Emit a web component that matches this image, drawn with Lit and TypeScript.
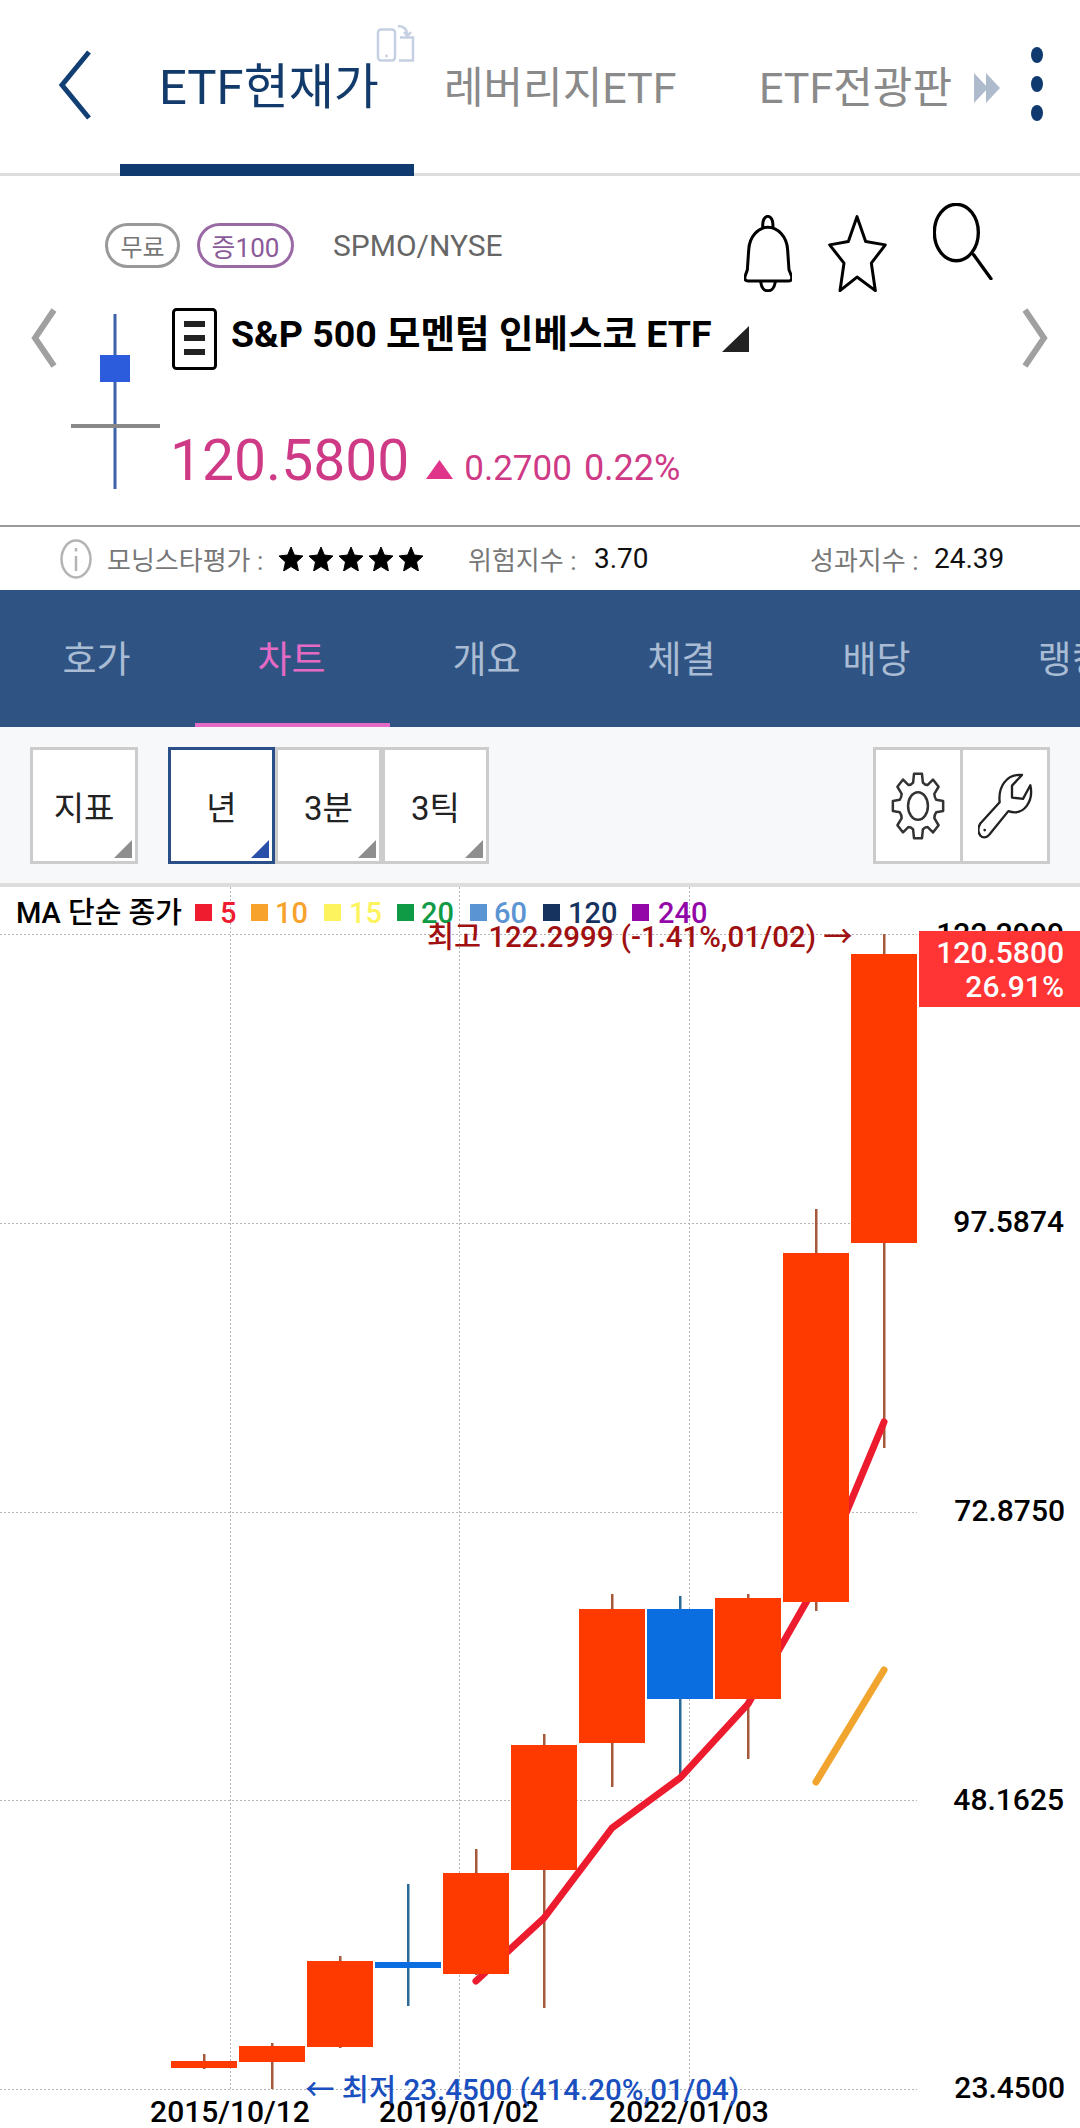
import { LitElement, html, css, svg } from "lit";
import { customElement } from "lit/decorators.js";

const FONT = `Roboto, "Noto Sans CJK KR", sans-serif`;

type Candle = { x: number; top: number; bot: number; hi: number; lo: number; blue?: boolean };
const candles: Candle[] = [
  { x: 171, top: 2061, bot: 2068, hi: 2054, lo: 2069 },
  { x: 239, top: 2046, bot: 2062, hi: 2043, lo: 2089 },
  { x: 307, top: 1961, bot: 2047, hi: 1956, lo: 2048 },
  { x: 375, top: 1962, bot: 1968, hi: 1884, lo: 2006, blue: true },
  { x: 443, top: 1873, bot: 1974, hi: 1849, lo: 1975 },
  { x: 511, top: 1745, bot: 1870, hi: 1734, lo: 2008 },
  { x: 579, top: 1609, bot: 1743, hi: 1594, lo: 1787 },
  { x: 647, top: 1609, bot: 1699, hi: 1596, lo: 1778, blue: true },
  { x: 715, top: 1598, bot: 1699, hi: 1594, lo: 1759 },
  { x: 783, top: 1253, bot: 1602, hi: 1209, lo: 1611 },
  { x: 851, top: 954, bot: 1243, hi: 934, lo: 1448 },
];

const legend = [
  { sq: 195, tx: 220, t: "5", c: "#ee1c2e" },
  { sq: 251, tx: 275, t: "10", c: "#f7a22d" },
  { sq: 324, tx: 349, t: "15", c: "#fdf35e" },
  { sq: 397, tx: 421, t: "20", c: "#0f9b45" },
  { sq: 470, tx: 494, t: "60", c: "#5b94d2" },
  { sq: 543, tx: 568, t: "120", c: "#16325f" },
  { sq: 632, tx: 658, t: "240", c: "#9306a8" },
];

const gearPath = (() => {
  const p = (r: number, deg: number) => {
    const a = (deg * Math.PI) / 180;
    return `${(r * Math.cos(a)).toFixed(3)} ${(r * Math.sin(a)).toFixed(3)}`;
  };
  let d = "";
  for (let i = 0; i < 8; i++) {
    const a = i * 45 - 90;
    d += `${i ? "L" : "M"}${p(0.74, a - 15)} L${p(1, a - 9)} L${p(1, a + 9)} L${p(0.74, a + 15)} `;
    d += `Q${p(0.7, a + 22.5)} ${p(0.74, a + 30)} `;
  }
  return d + "Z";
})();

@customElement("app-root")
export class AppRoot extends LitElement {
  static styles = css`
    :host {
      display: block;
      width: 1080px;
      height: 2128px;
      overflow: hidden;
      background: #fff;
      font-family: Roboto, "Noto Sans CJK KR", sans-serif;
    }
    * { box-sizing: border-box; }
    svg { display: block; flex: none; }

    .top {
      height: 176px;
      border-bottom: 3px solid #ddd;
      display: flex;
      align-items: flex-start;
      white-space: nowrap;
    }
    .back { margin: 50px 0 0 58px; }
    .tab { flex: none; }
    .tab.on {
      position: relative;
      width: 294px;
      height: 173px;
      margin-left: 28px;
      padding: 64px 0 0 39px;
      font-size: 49px;
      line-height: 48px;
      color: #123a6b;
    }
    .tab.on::after {
      content: "";
      position: absolute;
      left: 0;
      right: 0;
      bottom: -3px;
      height: 12px;
      background: #0e3a70;
    }
    .rotate { position: absolute; left: 256px; top: 24px; }
    .tab.off {
      margin-top: 67px;
      font-size: 43px;
      line-height: 43px;
      color: #8a8a8a;
    }
    .t2 { margin-left: 30px; width: 232px; }
    .t3 { margin-left: 83px; width: 190px; }
    .more { margin: 72px 0 0 25px; }
    .dots { margin: 46px 0 0 30px; }

    .quote {
      height: 351px;
      border-bottom: 2px solid #999;
    }
    .q1 {
      height: 124px;
      padding: 47px 87px 0 105px;
      display: flex;
      align-items: flex-start;
    }
    .chip {
      height: 45px;
      border: 3px solid #999;
      border-radius: 23px;
      display: flex;
      align-items: center;
      justify-content: center;
      color: #777;
      font-size: 24px;
      width: 75px;
    }
    .chip.mid {
      width: 97px;
      margin-left: 17px;
      border-color: #9a6aa5;
      color: #8b5a98;
      font-size: 26px;
    }
    .code {
      margin-left: 39px;
      font-size: 30px;
      line-height: 45px;
      color: #666;
    }
    .bell { margin: -8px 0 0 auto; }
    .star { margin: -8px 0 0 36px; }
    .search { margin: -20px 0 0 46px; }

    .q2 {
      height: 225px;
      padding-left: 31px;
      display: flex;
      align-items: flex-start;
    }
    .chev-l { margin-top: 8px; }
    .chev-r { margin: 8px 32px 0 auto; }
    .mini { margin: 14px 0 0 14px; }
    .main { margin: 8px 0 0 12px; }
    .name { display: flex; align-items: flex-start; }
    .title {
      margin: 6px 0 0 14px;
      font-size: 37.5px;
      line-height: 40px;
      font-weight: 700;
      color: #000;
      white-space: nowrap;
    }
    .caret { margin: 18px 0 0 10px; }
    .price {
      margin-top: 63px;
      display: flex;
      align-items: baseline;
      color: #cf3a86;
      white-space: nowrap;
    }
    .now { font-size: 57px; line-height: 56px; margin-left: -2px; }
    .up { margin: 0 11px 10px 17px; align-self: flex-end; }
    .chg { font-size: 35px; line-height: 30px; }
    .pct { font-size: 36px; line-height: 30px; margin-left: 12px; }

    .info {
      height: 63px;
      padding-left: 60px;
      display: flex;
      align-items: center;
      white-space: nowrap;
      font-size: 26px;
      color: #777;
    }
    .lab1 { margin-left: 15px; width: 172px; }
    .stars { display: flex; gap: 6px; width: 189px; }
    .lab2 { width: 126px; }
    .val { font-size: 28px; color: #111; }
    .v1 { width: 216px; }
    .lab3 { width: 124px; }

    .nav {
      height: 137px;
      background: #2f5483;
      display: flex;
      overflow: hidden;
    }
    .nav div {
      flex: none;
      width: 195px;
      padding-right: 2px;
      display: flex;
      align-items: center;
      justify-content: center;
      font-size: 37px;
      color: #a9bcd4;
      border-bottom: 4px solid transparent;
    }
    .nav div.on { color: #e56ac6; border-bottom-color: #e56ac6; }

    .tools {
      height: 160px;
      background: #f7f8f9;
      border-bottom: 4px solid #ddd;
      padding: 20px 30px 0;
      display: flex;
      align-items: flex-start;
    }
    .btn {
      position: relative;
      flex: none;
      width: 107px;
      height: 117px;
      background: #fff;
      border: 3px solid #ccc;
      display: flex;
      align-items: center;
      justify-content: center;
      font-size: 33px;
      color: #222;
    }
    .btn::after {
      content: "";
      position: absolute;
      right: 3px;
      bottom: 3px;
      width: 18px;
      height: 18px;
      background: #8e8e8e;
      clip-path: polygon(100% 0, 100% 100%, 0 100%);
    }
    .btn.first { width: 108px; margin-right: 30px; }
    .btn.sel { border-color: #2a4f88; }
    .btn.sel::after { background: #2a4fa8; }
    .set {
      margin-left: auto;
      width: 177px;
      height: 117px;
      background: #fff;
      border: 3px solid #ccc;
      display: flex;
    }
    .set div {
      flex: 1;
      display: flex;
      align-items: center;
      justify-content: center;
    }
    .set div + div { border-left: 3px solid #ccc; }

    .chart { width: 1080px; height: 1241px; }
    .chart text { font-family: Roboto, "Noto Sans CJK KR", sans-serif; }
    .lg { font-size: 29px; font-weight: 500; }
    .ax { font-size: 30px; font-weight: 500; fill: #000; }
    .box { font-size: 30px; font-weight: 500; fill: #fff; }
    .hi { font-size: 29.4px; font-weight: 500; fill: #a01010; }
    .lo { font-size: 29.5px; font-weight: 500; fill: #1a4fc0; }
    .grid { stroke: #b4b4b4; stroke-width: 1; stroke-dasharray: 2 2; fill: none; }
    .ma { fill: none; stroke-width: 7; stroke-linecap: round; stroke-linejoin: round; }
  `;

  private renderChart() {
    const hs = [934, 1223, 1512, 1800, 2089];
    const vs = [230, 459, 689];
    const red = "476,1981 544,1918 612,1828 680,1778 748,1704 816,1585 884,1422";
    return html`<svg class="chart" viewBox="0 887 1080 1241">
      ${hs.map((y) => svg`<line class="grid" x1="0" x2="917" y1=${y + 0.5} y2=${y + 0.5}></line>`)}
      ${vs.map((x) => svg`<line class="grid" x1=${x + 0.5} x2=${x + 0.5} y1="887" y2="2089"></line>`)}

      ${svg`<text class="lg" x="16" y="923" fill="#000">MA 단순 종가</text>`}
      ${legend.map(
        (l) => svg`<rect x=${l.sq} y="904" width="17" height="17" fill=${l.c}></rect>
          <text class="lg" x=${l.tx} y="923" fill=${l.c}>${l.t}</text>`
      )}

      <text class="ax" x="1064" y="944" text-anchor="end">122.2999</text>
      <text class="ax" x="1064" y="1232" text-anchor="end">97.5874</text>
      <text class="ax" x="1065" y="1521" text-anchor="end">72.8750</text>
      <text class="ax" x="1064" y="1810" text-anchor="end">48.1625</text>
      <text class="ax" x="1065" y="2098" text-anchor="end">23.4500</text>
      <text class="ax" x="230" y="2122" text-anchor="middle">2015/10/12</text>
      <text class="ax" x="459" y="2122" text-anchor="middle">2019/01/02</text>
      <text class="ax" x="689" y="2122" text-anchor="middle">2022/01/03</text>

      ${candles.map(
        (c) => svg`<rect x=${c.x + 32} y=${c.hi} width="2.500" height=${c.lo - c.hi} fill=${c.blue ? "#2b6a96" : "#a5593a"}></rect>`
      )}
      <polyline class="ma" points=${red} stroke="#ec1c2e"></polyline>
      <polyline class="ma" points="816,1782 884,1670" stroke="#f2a52e"></polyline>
      ${candles.map(
        (c) => svg`<rect x=${c.x} y=${c.top} width="66" height=${c.bot - c.top} fill=${c.blue ? "#0a6de0" : "#ff3a00"}></rect>`
      )}

      <text class="hi" x="427" y="947">최고 122.2999 (-1.41%,01/02) →</text>
      <text class="lo" x="305" y="2100">← 최저 23.4500 (414.20%,01/04)</text>

      <rect x="919" y="931" width="161" height="76" fill="#ff3535"></rect>
      <text class="box" x="1064" y="963" text-anchor="end">120.5800</text>
      <text class="box" x="1064" y="997" text-anchor="end">26.91%</text>
    </svg>`;
  }

  render() {
    return html`
      <div class="top">
        <svg class="back" width="34" height="70" viewBox="0 0 34 70" fill="none" stroke="#123f73" stroke-width="5">
          <path d="M31 2 L4 35 L31 68"></path>
        </svg>
        <div class="tab on">
          ETF현재가
          <svg class="rotate" width="40" height="40" viewBox="0 0 40 40" fill="none" stroke="#c5d0e2" stroke-width="2.5">
            <rect x="2" y="5.5" width="17" height="31" rx="3"></rect>
            <circle cx="10.5" cy="32" r="1.4" fill="#c5d0e2" stroke="none"></circle>
            <path d="M24 13.5 H37 V36.5 H23"></path>
            <path d="M22 2 C28 2 31 5 31.500 11 M28 8 L31.500 12 L35 8"></path>
          </svg>
        </div>
        <div class="tab off t2">레버리지ETF</div>
        <div class="tab off t3">ETF전광판</div>
        <svg class="more" width="26" height="32" viewBox="0 0 26 32" fill="#aebbcd">
          <path d="M0 1 L14 16 L0 31 Z M12 1 L26 16 L12 31 Z"></path>
        </svg>
        <svg class="dots" width="14" height="76" viewBox="0 0 14 76" fill="#0e3a70">
          <ellipse cx="7" cy="9" rx="6" ry="8"></ellipse>
          <ellipse cx="7" cy="38" rx="6" ry="8"></ellipse>
          <ellipse cx="7" cy="67" rx="6" ry="8"></ellipse>
        </svg>
      </div>

      <div class="quote">
        <div class="q1">
          <div class="chip">무료</div>
          <div class="chip mid">증100</div>
          <div class="code">SPMO/NYSE</div>
          <svg class="bell" width="48" height="77" viewBox="72 75 143 232" fill="none" stroke="#000" stroke-width="9" stroke-linejoin="round" stroke-linecap="round" preserveAspectRatio="none">
            <path d="M128 112 C124 68 162 68 158 112"></path>
            <path d="M82 240 L86 180 C88 140 115 112 143 112 C172 112 200 140 202 180 L206 240 L214 260 Q216 274 204 274 L84 274 Q72 274 75 260 Z"></path>
            <path d="M122 278 C126 312 160 312 165 278"></path>
          </svg>
          <svg class="star" width="59" height="77" viewBox="325 75 177 232" fill="none" stroke="#000" stroke-width="9" stroke-linejoin="round" preserveAspectRatio="none">
            <path d="M412 80 L438 155 L497 165 L455 220 L467 303 L412 262 L361 303 L373 220 L330 165 L386 155 Z"></path>
          </svg>
          <svg class="search" width="60" height="77" viewBox="640 36 180 232" fill="none" stroke="#000" stroke-width="10" stroke-linecap="round" preserveAspectRatio="none">
            <ellipse cx="710" cy="125" rx="66" ry="85"></ellipse>
            <path d="M762 192 L814 264"></path>
          </svg>
        </div>
        <div class="q2">
          <svg class="chev-l" width="26" height="60" viewBox="0 0 26 60" fill="none" stroke="#a0a0a0" stroke-width="6">
            <path d="M23 2 L4 30 L23 58"></path>
          </svg>
          <svg class="mini" width="89" height="175" viewBox="71 314 89 175">
            <rect x="113.500" y="314" width="3" height="175" fill="#3d62a8"></rect>
            <rect x="100" y="355" width="30" height="27" fill="#2c5bdc"></rect>
            <rect x="71" y="424" width="89" height="4" fill="#888"></rect>
          </svg>
          <div class="main">
            <div class="name">
              <svg width="45" height="62" viewBox="0 0 45 62">
                <rect x="1.500" y="1.500" width="42" height="59" rx="3" fill="#fff" stroke="#000" stroke-width="3"></rect>
                <rect x="12" y="13" width="21" height="6" fill="#222"></rect>
                <rect x="12" y="27" width="21" height="6" fill="#222"></rect>
                <rect x="12" y="41" width="21" height="6" fill="#222"></rect>
              </svg>
              <div class="title">S&amp;P 500 모멘텀 인베스코 ETF</div>
              <svg class="caret" width="27" height="26" viewBox="0 0 27 26"><path d="M27 0 V26 H0 Z" fill="#222"></path></svg>
            </div>
            <div class="price">
              <span class="now">120.5800</span>
              <svg class="up" width="27" height="19" viewBox="0 0 27 19"><path d="M13.500 0 L27 19 H0 Z" fill="#e0348a"></path></svg>
              <span class="chg">0.2700</span>
              <span class="pct">0.22%</span>
            </div>
          </div>
          <svg class="chev-r" width="26" height="60" viewBox="0 0 26 60" fill="none" stroke="#a0a0a0" stroke-width="6">
            <path d="M3 2 L22 30 L3 58"></path>
          </svg>
        </div>
      </div>

      <div class="info">
        <svg width="32" height="40" viewBox="0 0 32 40" fill="none" stroke="#b4b4b4" stroke-width="2.500">
          <ellipse cx="16" cy="20" rx="14.500" ry="18.500"></ellipse>
          <path d="M16 17 V32"></path>
          <path d="M16 9 V12.500"></path>
        </svg>
        <span class="lab1">모닝스타평가 :</span>
        <span class="stars">
          ${[0, 1, 2, 3, 4].map(
            () => html`<svg width="24" height="24" viewBox="0 0 24 24"><path d="M12 0 L15.300 8 L24 9 L17.500 15 L19.400 24 L12 19.500 L4.600 24 L6.500 15 L0 9 L8.700 8 Z" fill="#000" stroke="#000" stroke-width="1" stroke-linejoin="round"></path></svg>`
          )}
        </span>
        <span class="lab2">위험지수 :</span>
        <span class="val v1">3.70</span>
        <span class="lab3">성과지수 :</span>
        <span class="val">24.39</span>
      </div>

      <div class="nav">
        <div>호가</div>
        <div class="on">차트</div>
        <div>개요</div>
        <div>체결</div>
        <div>배당</div>
        <div>랭킹</div>
      </div>

      <div class="tools">
        <div class="btn first">지표</div>
        <div class="btn sel">년</div>
        <div class="btn">3분</div>
        <div class="btn">3틱</div>
        <div class="set">
          <div>
            <svg width="56" height="72" viewBox="-1.1 -1.1 2.2 2.2" preserveAspectRatio="none" fill="none" stroke="#333" stroke-linejoin="round">
              <path d=${gearPath} stroke-width="2.500" vector-effect="non-scaling-stroke"></path>
              <ellipse cx="0" cy="0" rx="0.39" ry="0.42" stroke-width="2.500" vector-effect="non-scaling-stroke"></ellipse>
            </svg>
          </div>
          <div>
            <svg width="55" height="68" viewBox="355 95 165 205" fill="none" stroke="#222" stroke-width="7" stroke-linejoin="round" preserveAspectRatio="none">
              <path d="M362 250 L420 186 C415 140 440 100 487 104 L457 136 L457 172 L490 176 L512 135 C522 180 495 230 446 213 L388 285 C370 305 345 280 362 250 Z"></path>
              <circle cx="375" cy="270" r="4" fill="#222" stroke="none"></circle>
            </svg>
          </div>
        </div>
      </div>

      ${this.renderChart()}
    `;
  }
}
